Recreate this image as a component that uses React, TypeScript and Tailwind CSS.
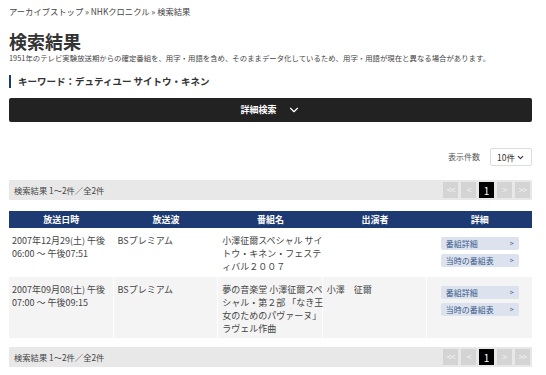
import { ChevronDown } from "lucide-react";

const rows = [
  {
    date: ["2007年12月29(土) 午後", "06:00 〜 午後07:51"],
    wave: "BSプレミアム",
    title: ["小澤征爾スペシャル サイ", "トウ・キネン・フェステ", "ィバル２００７"],
    cast: "",
  },
  {
    date: ["2007年09月08(土) 午後", "07:00 〜 午後09:15"],
    wave: "BSプレミアム",
    title: ["夢の音楽堂 小澤征爾スペ", "シャル・第２部 「なき王", "女のためのパヴァーヌ」", "ラヴェル作曲"],
    cast: "小澤　征爾",
  },
];

function Pager() {
  return (
    <div className="flex items-center justify-between bg-[#e8e8e8] h-[20px] pl-[5px] pr-[2px]">
      <span className="text-[8.3px] text-[#444]">検索結果 1〜2件／全2件</span>
      <div className="flex gap-[3px]">
        <PageBtn label="<<" />
        <PageBtn label="<" />
        <div className="w-[15px] h-[16px] bg-black text-white text-[10px] flex items-center justify-center">1</div>
        <PageBtn label=">" />
        <PageBtn label=">>" />
      </div>
    </div>
  );
}

function PageBtn({ label }: any) {
  return (
    <div className="w-[15px] h-[16px] bg-[#d4d4d4] text-[#f2f2f2] text-[9px] tracking-[-1px] flex items-center justify-center">
      {label}
    </div>
  );
}

function LinkBtn({ label }: any) {
  return (
    <div className="flex items-center justify-between w-[78px] h-[13px] bg-[#dce3ee] rounded-[2px] px-[5px] text-[8px] text-[#3a5a8c]">
      <span>{label}</span>
      <span className="text-[7px]">&gt;</span>
    </div>
  );
}

export default function App() {
  return (
    <div
      className="w-[546px] h-[375px] bg-white overflow-hidden pl-[9px] pr-[14px] text-[#333]"
      style={{ fontFamily: '"Noto Sans CJK JP", "Noto Sans", sans-serif' }}
    >
      {/* breadcrumb */}
      <div className="pt-[4px] text-[8.3px] text-[#444] leading-[14px]">
        アーカイブストップ » NHKクロニクル » 検索結果
      </div>

      {/* title */}
      <h1 className="mt-[11px] text-[18px] font-bold leading-[24px]">検索結果</h1>
      <p className="text-[7.4px] leading-[10px] text-[#444] whitespace-nowrap">
        1951年のテレビ実験放送期からの確定番組を、用字・用語を含め、そのままデータ化しているため、用字・用語が現在と異なる場合があります。
      </p>

      {/* keyword */}
      <div className="mt-[12px] border-l-[2px] border-[#1e3a72] pl-[7px] text-[9.5px] font-bold leading-[13px]">
        キーワード：デュティユー サイトウ・キネン
      </div>

      {/* detail search bar */}
      <div className="mt-[10px] h-[24px] bg-[#222] rounded-[2px] flex items-center justify-center gap-[10px] text-white">
        <span className="text-[9px] font-bold">詳細検索</span>
        <ChevronDown size={14} strokeWidth={2} />
      </div>

      {/* display count */}
      <div className="mt-[26px] flex items-center justify-end gap-[10px]">
        <span className="text-[8px] text-[#555]">表示件数</span>
        <div className="w-[42px] h-[18px] border border-[#ddd] rounded-[2px] flex items-center justify-between px-[6px] text-[8.5px]">
          <span>10件</span>
          <ChevronDown size={9} strokeWidth={3} />
        </div>
      </div>

      <div className="mt-[14px]">
        <Pager />
      </div>

      {/* table */}
      <div className="mt-[11px]">
        <div className="grid grid-cols-5 bg-[#1e3a72] h-[17px] items-center text-white text-[9px] font-bold text-center">
          <div>放送日時</div>
          <div>放送波</div>
          <div>番組名</div>
          <div>出演者</div>
          <div>詳細</div>
        </div>
        {rows.map((r, i) => {
          const sep = i % 2 === 1 ? "border-r border-white" : "";
          return (
            <div
              key={i}
              className={`grid grid-cols-5 text-[9px] leading-[13px] text-[#444] ${
                i % 2 === 1 ? "bg-[#f4f4f4]" : "bg-white"
              }`}
            >
              <div className={`px-[3px] pt-[6px] pb-[3px] whitespace-nowrap ${sep}`}>
                <div>{r.date[0]}</div>
                <div>{r.date[1]}</div>
              </div>
              <div className={`px-[4px] pt-[6px] ${sep}`}>{r.wave}</div>
              <div className={`px-[4px] pt-[6px] pb-[3px] whitespace-nowrap ${sep}`}>
                {r.title.map((t) => (
                  <div key={t}>{t}</div>
                ))}
              </div>
              <div className={`px-[4px] pt-[6px] ${sep}`}>{r.cast}</div>
              <div className="pt-[9px] pb-[10px] flex flex-col items-center gap-[4px]">
                <LinkBtn label="番組詳細" />
                <LinkBtn label="当時の番組表" />
              </div>
            </div>
          );
        })}
      </div>

      <div className="mt-[9px]">
        <Pager />
      </div>
    </div>
  );
}
